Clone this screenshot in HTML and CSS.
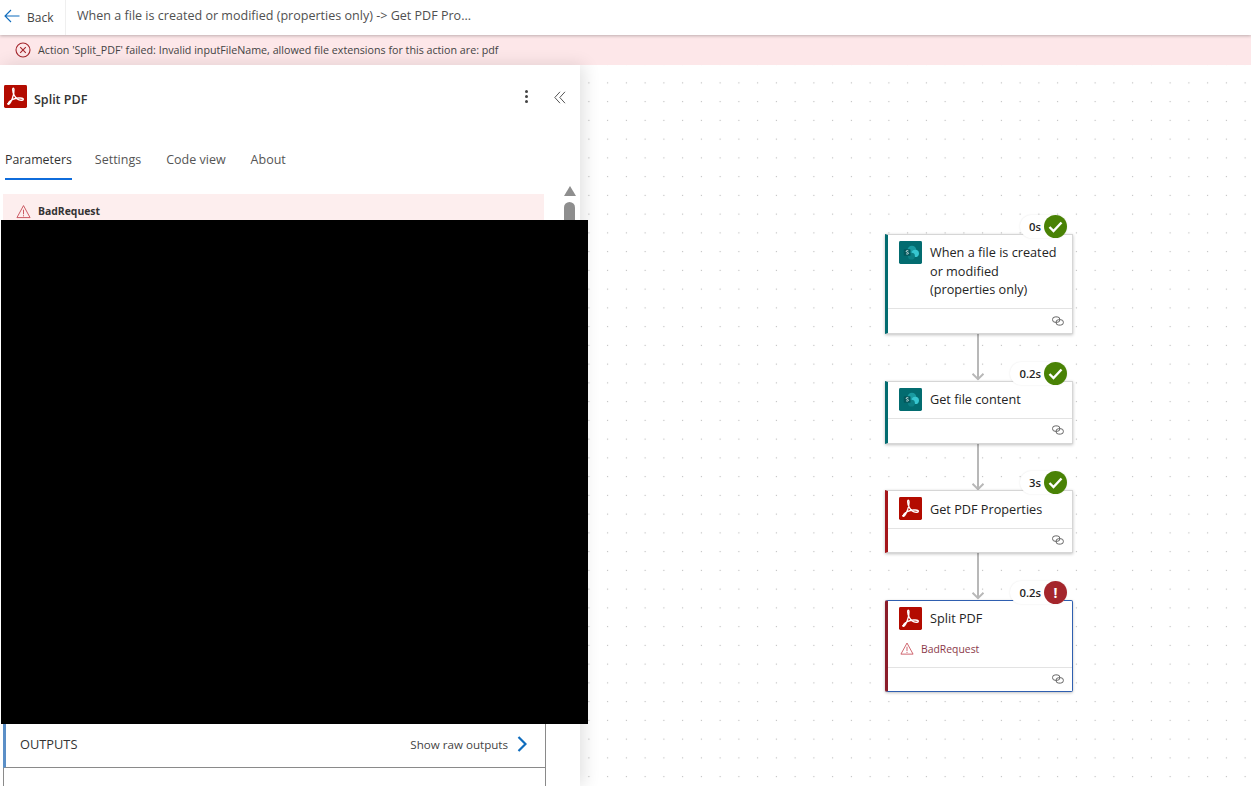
FILE: index.html
```html
<!DOCTYPE html>
<html lang="en">
<head>
<meta charset="utf-8">
<title>Flow run</title>
<link rel="stylesheet" href="styles.css">
</head>
<body>
<svg class="defs" width="0" height="0" aria-hidden="true">
  <symbol id="pdf" viewBox="0 0 24 24">
    <rect width="24" height="24" rx="1.5" fill="#b30b00"/>
    <path transform="matrix(1 0 0 1.2 0 -3)" d="M3.8 18.800c1.300 1.400 3.300-1.200 4.800-4.400 1.300-2.800 2.200-5.400 1.900-8-.2-1.500-1.500-1.500-1.500.2 0 3.400 3 7.400 6 8.600 2.100.8 5 .9 5.200-.2.200-1-2.400-1.400-5-1.100-4 .4-8.200 1.800-9.900 3.500-.8.800-1 1.600-.5 1.400z" fill="none" stroke="#fff" stroke-width="1.300" stroke-linejoin="round"/>
  </symbol>
  <symbol id="sp" viewBox="0 0 24 24">
    <rect width="24" height="24" rx="1.500" fill="#036c70"/>
    <circle cx="13.500" cy="9.500" r="4.600" fill="#1a9ba1"/>
    <circle cx="17" cy="13" r="3.800" fill="#37c6d0"/>
    <circle cx="13" cy="15.800" r="3.600" fill="#0d7f84"/>
    <rect x="5" y="8.500" width="7" height="7" rx="1" fill="#03585c"/>
    <path d="M9.800 10.300c-.6-.6-2.300-.5-2.300.5 0 1.200 2.400.7 2.400 2 0 1-1.800 1.100-2.500.4" fill="none" stroke="#fff" stroke-width=".8"/>
  </symbol>
  <symbol id="link" viewBox="0 0 12 10">
    <rect x=".5" y=".9" width="7.400" height="5.400" rx="2.700" fill="none" stroke="#666" stroke-width="1"/>
    <rect x="4" y="3.700" width="7.400" height="5.400" rx="2.700" fill="none" stroke="#666" stroke-width="1"/>
  </symbol>
  <symbol id="check" viewBox="0 0 23 23">
    <circle cx="11.500" cy="11.500" r="11.500" fill="#498205"/>
    <path d="M5.500 12l4 4 8-8.500" fill="none" stroke="#fff" stroke-width="2.400"/>
  </symbol>
  <symbol id="warn" viewBox="0 0 16 15">
    <path d="M8 1.200 15 14H1z" fill="none" stroke="#c8505a" stroke-width="1" stroke-linejoin="round"/>
    <path d="M8 5.500v5M8 11.500v1.200" stroke="#c8505a" stroke-width="1"/>
  </symbol>
  <symbol id="edge" viewBox="0 0 16 47">
    <path d="M8 0v45M2.500 40 8 45.500 13.500 40" fill="none" stroke="#b8b8b8" stroke-width="2"/>
  </symbol>
</svg>

<header class="topbar">
  <button class="back">
    <svg class="back-icon" viewBox="0 0 16 14"><path d="M15.500 7H1M7 1 1 7l6 6" fill="none" stroke="#0f6cbd" stroke-width="1.100"/></svg>
    <span class="back-label">Back</span>
  </button>
  <div class="flow-title">When a file is created or modified (properties only) -&gt; Get PDF Pro...</div>
</header>

<div class="errorbar">
  <svg class="error-icon" viewBox="0 0 16 16"><circle cx="8" cy="8" r="7" fill="none" stroke="#a4262c" stroke-width="1.100"/><path d="m5.200 5.200 5.600 5.600m0-5.600-5.600 5.600" stroke="#a4262c" stroke-width="1.100"/></svg>
  <span>Action 'Split_PDF' failed: Invalid inputFileName, allowed file extensions for this action are: pdf</span>
</div>

<main class="workspace">
  <aside class="panel">
    <div class="panel-head">
      <svg class="icon-24"><use href="#pdf"/></svg>
      <h1 class="panel-title">Split PDF</h1>
      <div class="kebab"><i></i><i></i><i></i></div>
      <svg class="collapse" viewBox="0 0 12 13"><path d="M6 .8.800 6.500 6 12.200M11 .8 5.800 6.500 11 12.200" fill="none" stroke="#555" stroke-width="1"/></svg>
    </div>
    <nav class="tabs">
      <a class="tab active">Parameters</a>
      <a class="tab">Settings</a>
      <a class="tab">Code view</a>
      <a class="tab">About</a>
    </nav>
    <div class="panel-body">
      <div class="panel-scroll">
        <div class="alert">
          <svg class="alert-icon"><use href="#warn"/></svg>
          <span>BadRequest</span>
        </div>
        <div class="outputs">
          <span class="outputs-label">OUTPUTS</span>
          <span class="raw">Show raw outputs</span>
          <svg class="chev" viewBox="0 0 10 16"><path d="m1.500 1 7 7-7 7" fill="none" stroke="#0f6cbd" stroke-width="2.200"/></svg>
        </div>
        <div class="outputs-body"></div>
      </div>
      <div class="scrollbar">
        <div class="scroll-up"></div>
        <div class="scroll-thumb"></div>
      </div>
    </div>
  </aside>

  <section class="canvas">
    <div class="flow">
      <article class="card teal">
        <div class="badge"><span>0s</span><svg class="status"><use href="#check"/></svg></div>
        <div class="card-main">
          <svg class="icon-24"><use href="#sp"/></svg>
          <div class="card-title">When a file is created or modified (properties only)</div>
        </div>
        <div class="card-foot"><svg class="link"><use href="#link"/></svg></div>
      </article>
      <svg class="edge"><use href="#edge"/></svg>
      <article class="card teal">
        <div class="badge"><span>0.2s</span><svg class="status"><use href="#check"/></svg></div>
        <div class="card-main">
          <svg class="icon-24"><use href="#sp"/></svg>
          <div class="card-title">Get file content</div>
        </div>
        <div class="card-foot"><svg class="link"><use href="#link"/></svg></div>
      </article>
      <svg class="edge"><use href="#edge"/></svg>
      <article class="card red">
        <div class="badge"><span>3s</span><svg class="status"><use href="#check"/></svg></div>
        <div class="card-main">
          <svg class="icon-24"><use href="#pdf"/></svg>
          <div class="card-title">Get PDF Properties</div>
        </div>
        <div class="card-foot"><svg class="link"><use href="#link"/></svg></div>
      </article>
      <svg class="edge"><use href="#edge"/></svg>
      <article class="card red selected">
        <div class="badge"><span>0.2s</span><span class="status fail">!</span></div>
        <div class="card-main">
          <svg class="icon-24"><use href="#pdf"/></svg>
          <div class="card-title">Split PDF</div>
        </div>
        <div class="card-error"><svg class="card-warn"><use href="#warn"/></svg><span>BadRequest</span></div>
        <div class="card-foot"><svg class="link"><use href="#link"/></svg></div>
      </article>
    </div>
  </section>
</main>
<div class="redaction"></div>
</body>
</html>
```

FILE: styles.css
```css
* { box-sizing: border-box; }
html, body { height: 100%; }
body {
  margin: 0;
  height: 786px;
  overflow: hidden;
  display: flex;
  flex-direction: column;
  background: #fff;
  color: #242424;
  font-family: "Open Sans", "Noto Sans", "Liberation Sans", sans-serif;
  position: relative;
}
.defs { position: absolute; }
.icon-24 { width: 23px; height: 23px; flex: none; display: block; }

.topbar {
  height: 35px;
  flex: none;
  display: flex;
  align-items: stretch;
  background: #fff;
  box-shadow: 0 1px 3px rgba(0,0,0,.25);
  position: relative;
  z-index: 3;
}
.back {
  width: 66px;
  padding: 0 0 0 4px;
  display: flex;
  align-items: center;
  gap: 7px;
  border: 0;
  border-right: 1px solid #efefef;
  background: none;
  font: inherit;
  font-size: 12px;
  color: #444;
}
.back-icon { width: 16px; height: 14px; margin-top: -3px; }
.back-label { margin-top: -1px; }
.flow-title {
  padding-left: 11px;
  line-height: 31px;
  font-size: 12.550px;
  color: #505050;
}

.errorbar {
  height: 30px;
  flex: none;
  display: flex;
  align-items: center;
  gap: 7px;
  padding-left: 15px;
  background: #fde7e9;
  font-size: 10.700px;
  color: #444;
}
.error-icon { width: 16px; height: 16px; }

.workspace { flex: 1; display: flex; min-height: 0; }

.panel {
  width: 580px;
  flex: none;
  display: flex;
  flex-direction: column;
  background: #fff;
  box-shadow: 4px 0 16px rgba(0,0,0,.12);
  position: relative;
  z-index: 2;
}
.panel-head {
  height: 64px;
  flex: none;
  padding: 20px 14px 0 4px;
  display: flex;
  align-items: flex-start;
  gap: 7px;
}
.panel-title {
  flex: 1;
  margin: 6px 0 0;
  font-size: 12.500px;
  font-weight: 600;
  color: #333;
}
.kebab { display: flex; flex-direction: column; gap: 2px; margin: 5px 19px 0 0; }
.kebab i { width: 3px; height: 3px; border-radius: 50%; background: #444; }
.collapse { width: 12px; height: 13px; margin: 6px 0 0; }

.tabs { display: flex; flex: none; height: 51px; gap: 25px; padding: 0 0 0 5px; }
.tab {
  height: 51px;
  padding-top: 22px;
  font-size: 12.500px;
  color: #555;
}
.tab.active {
  margin-right: -2px;
  font-size: 12.350px;
  color: #333;
  font-weight: 500;
  border-bottom: 2px solid #0f6cdb;
}

.panel-body { flex: 1; display: flex; min-height: 0; margin-top: 14px; }
.panel-scroll { width: 546px; flex: none; padding-left: 3px; }
.alert {
  width: 541px;
  height: 530px;
  background: #fdeeee;
  padding: 10px 0 0 13px;
  display: flex;
  align-items: flex-start;
  gap: 7px;
  font-size: 10.400px;
  font-weight: 700;
  color: #333;
}
.alert-icon { width: 15px; height: 15px; flex: none; }
.outputs {
  height: 44px;
  display: flex;
  align-items: center;
  border-left: 3px solid #5b8fc7;
  border-right: 1px solid #8a8a8a;
  border-bottom: 1px solid #8a8a8a;
  padding: 0 18px 3px 14px;
  color: #333;
}
.outputs-label { flex: 1; font-size: 12.800px; font-weight: 500; }
.raw { font-size: 11.600px; color: #444; margin-right: 9px; }
.chev { width: 10px; height: 16px; }
.outputs-body {
  height: 18px;
  border-left: 1px solid #8a8a8a;
  border-right: 1px solid #8a8a8a;
}
.scrollbar {
  margin-left: 17px;
  width: 13px;
  display: flex;
  flex-direction: column;
  align-items: center;
  gap: 6px;
}
.scroll-up {
  width: 0;
  height: 0;
  margin-top: -8px;
  border-left: 6.500px solid transparent;
  border-right: 6.500px solid transparent;
  border-bottom: 10px solid #8e8e8e;
}
.scroll-thumb { width: 11px; height: 60px; border-radius: 6px 6px 0 0; background: #8e8e8e; }

.canvas {
  flex: 1;
  position: relative;
  background-color: #fff;
  background-image: radial-gradient(circle, #b8b8b8 .7px, transparent 1px);
  background-size: 18.750px 18.750px;
  background-position: -0.500px 8.500px;
  overflow: hidden;
}
.flow {
  position: absolute;
  left: 305px;
  top: 169px;
  width: 188px;
  display: flex;
  flex-direction: column;
  align-items: center;
}
.edge { width: 16px; height: 46.700px; display: block; flex: none; margin-left: -2px; }

.card {
  width: 100%;
  position: relative;
  background: #fff;
  border: 1px solid #d6d6d6;
  border-left: 3px solid;
  box-shadow: 0 1px 3px rgba(0,0,0,.25);
}
.card.teal { border-left-color: #036c70; }
.card.red { border-left-color: #a4161a; }
.card.selected {
  border-color: #2f5fb0;
  border-left-color: #8a1c2a;
  border-radius: 2px;
}
.card-main {
  padding: 6px 12px 0 11px;
  display: flex;
  gap: 8px;
}
.card-title {
  padding-top: 2.400px;
  font-size: 12.700px;
  font-weight: 500;
  line-height: 18.500px;
  color: #242424;
  margin-bottom: 9.600px;
}
.card-error {
  margin: 4px 0 11px 12px;
  display: flex;
  align-items: center;
  gap: 7px;
  font-size: 10.400px;
  color: #8c3a4a;
}
.card-warn { width: 14px; height: 13px; flex: none; }
.card-foot {
  height: 24.500px;
  border-top: 1px solid #e3e3e3;
  display: flex;
  justify-content: flex-end;
  align-items: center;
  padding: 0 8px 1px 0;
}
.link { width: 12px; height: 10px; }

.badge {
  position: absolute;
  right: 5px;
  top: -20px;
  height: 23px;
  display: flex;
  align-items: center;
  gap: 3px;
  padding-left: 9px;
  border-radius: 12px;
  background: #fff;
  font-size: 11.300px;
  font-weight: 600;
  color: #242424;
  box-shadow: 0 0 2px rgba(0,0,0,.1);
}
.status { width: 23px; height: 23px; display: block; }
.status.fail {
  border-radius: 50%;
  background: #a4262c;
  color: #fff;
  text-align: center;
  font-size: 14px;
  line-height: 23px;
  font-weight: 700;
}

.redaction {
  position: absolute;
  left: 1px;
  top: 220px;
  width: 587px;
  height: 504px;
  background: #000;
  z-index: 5;
}
```
